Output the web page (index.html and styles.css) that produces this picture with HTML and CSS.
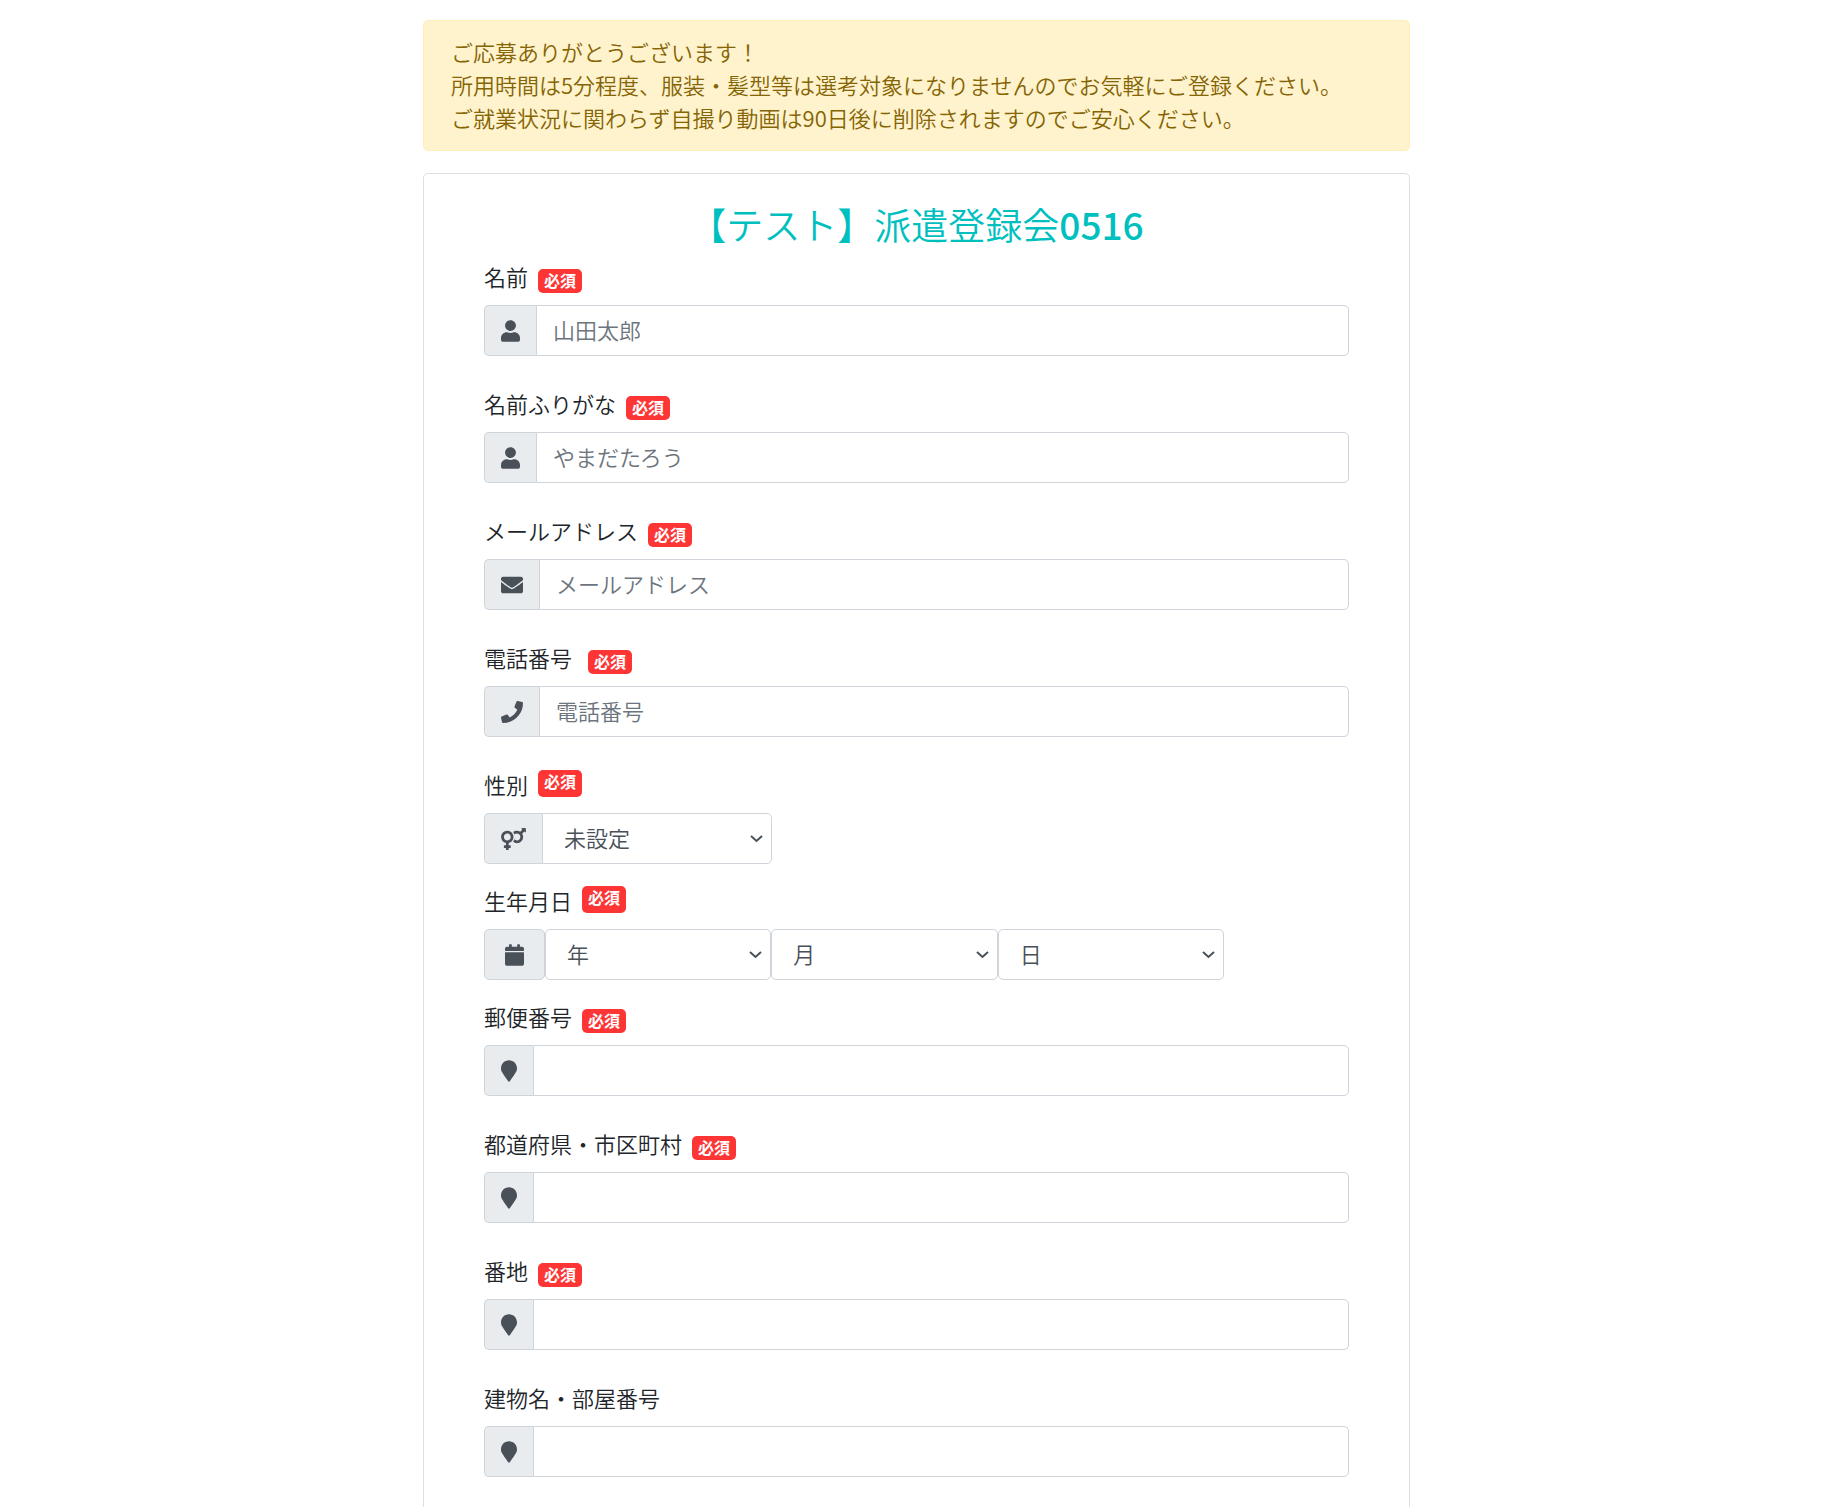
FILE: index.html
```html
<!DOCTYPE html>
<html lang="ja">
<head>
    <meta charset="UTF-8">
    <meta name="viewport" content="width=device-width, initial-scale=1.0">
    <title>【テスト】派遣登録会0516</title>
    <link rel="stylesheet" href="styles.css">
</head>
<body>
    <!-- Shared icons -->
    <svg class="icon-defs" aria-hidden="true">
        <symbol id="icon-user" viewBox="0 0 448 512"><path d="M224 256c70.7 0 128-57.3 128-128S294.7 0 224 0 96 57.3 96 128s57.3 128 128 128zm89.6 32h-16.7c-22.2 10.2-46.9 16-72.9 16s-50.6-5.8-72.9-16h-16.7C60.2 288 0 348.2 0 422.4V464c0 26.5 21.5 48 48 48h352c26.5 0 48-21.5 48-48v-41.6c0-74.2-60.2-134.4-134.4-134.4z"/></symbol>
        <symbol id="icon-marker" viewBox="0 0 384 512"><path d="M172.268 501.67C26.97 291.031 0 269.413 0 192 0 85.961 85.961 0 192 0s192 85.961 192 192c0 77.413-26.97 99.031-172.268 309.67-9.535 13.774-29.93 13.773-39.464 0z"/></symbol>
    </svg>

    <main class="container">
        <div class="alert">
            ご応募ありがとうございます！<br>
            所用時間は5分程度、服装・髪型等は選考対象になりませんのでお気軽にご登録ください。<br>
            ご就業状況に関わらず自撮り動画は90日後に削除されますのでご安心ください。
        </div>

        <form class="card">
            <h1 class="card-title">【テスト】派遣登録会<span class="title-number">0516</span></h1>

            <div class="form-group">
                <div class="form-label">
                    <label for="name">名前</label>
                    <span class="badge">必須</span>
                </div>
                <div class="input-group">
                    <span class="input-icon"><svg class="icon"><use href="#icon-user"/></svg></span>
                    <input type="text" id="name" class="form-control" placeholder="山田太郎">
                </div>
            </div>

            <div class="form-group">
                <div class="form-label">
                    <label for="kana">名前ふりがな</label>
                    <span class="badge">必須</span>
                </div>
                <div class="input-group">
                    <span class="input-icon"><svg class="icon"><use href="#icon-user"/></svg></span>
                    <input type="text" id="kana" class="form-control" placeholder="やまだたろう">
                </div>
            </div>

            <div class="form-group">
                <div class="form-label">
                    <label for="email">メールアドレス</label>
                    <span class="badge">必須</span>
                </div>
                <div class="input-group">
                    <span class="input-icon"><svg class="icon icon-square" viewBox="0 0 512 512"><path d="M502.3 190.8c3.9-3.1 9.7-.2 9.7 4.7V400c0 26.5-21.5 48-48 48H48c-26.5 0-48-21.5-48-48V195.6c0-5 5.7-7.8 9.7-4.7 22.4 17.4 52.1 39.5 154.1 113.6 21.1 15.4 56.7 47.8 92.2 47.6 35.7.3 72-32.8 92.3-47.6 102-74.1 131.6-96.3 154-113.7zM256 320c23.2.4 56.6-29.2 73.4-41.4 132.7-96.3 142.8-104.7 173.4-128.7 5.8-4.5 9.2-11.5 9.2-18.9v-19c0-26.5-21.5-48-48-48H48c-26.5 0-48 21.5-48 48v19c0 7.4 3.4 14.3 9.2 18.9 30.6 23.9 40.7 32.4 173.4 128.7 16.8 12.2 50.2 41.8 73.4 41.4z"/></svg></span>
                    <input type="email" id="email" class="form-control" placeholder="メールアドレス">
                </div>
            </div>

            <div class="form-group">
                <div class="form-label form-label-wide">
                    <label for="tel">電話番号</label>
                    <span class="badge">必須</span>
                </div>
                <div class="input-group">
                    <span class="input-icon"><svg class="icon icon-square" viewBox="0 0 512 512"><path d="M493.4 24.6l-104-24c-11.3-2.6-22.9 3.3-27.5 13.9l-48 112c-4.2 9.8-1.4 21.3 6.9 28l60.6 49.6c-36 76.7-98.9 140.5-177.2 177.2l-49.6-60.6c-6.8-8.3-18.2-11.1-28-6.9l-112 48C3.9 366.5-2 378.1.6 389.4l24 104C27.1 504.2 36.7 512 48 512c256.1 0 464-207.5 464-464 0-11.2-7.7-20.9-18.6-23.4z"/></svg></span>
                    <input type="tel" id="tel" class="form-control" placeholder="電話番号">
                </div>
            </div>

            <div class="form-group form-group-select">
                <div class="form-label">
                    <label for="gender">性別</label>
                    <span class="badge badge-tall">必須</span>
                </div>
                <div class="input-group gender-group">
                    <span class="input-icon"><svg class="icon icon-wide" viewBox="0 0 576 512"><path d="M564 0h-79c-10.7 0-16 12.9-8.5 20.5l16.9 16.9-48.7 48.7C422.5 72.1 396.2 64 368 64c-33.7 0-64.6 11.6-89.2 30.9 14 16.7 25 36 32.1 57.1 14.5-14.8 34.7-24 57.1-24 44.1 0 80 35.9 80 80s-35.9 80-80 80c-22.3 0-42.6-9.2-57.1-24-7.1 21.1-18 40.4-32.1 57.1 24.5 19.4 55.5 30.9 89.2 30.9 79.5 0 144-64.5 144-144 0-28.2-8.1-54.5-22.1-76.7l48.7-48.7 16.9 16.9c2.4 2.4 5.4 3.5 8.4 3.5 6.2 0 12.1-4.8 12.1-12V12c0-6.6-5.4-12-12-12zM144 64C64.5 64 0 128.5 0 208c0 68.5 47.9 125.9 112 140.4V400H76c-6.6 0-12 5.4-12 12v40c0 6.6 5.4 12 12 12h36v36c0 6.6 5.4 12 12 12h40c6.6 0 12-5.4 12-12v-36h36c6.6 0 12-5.4 12-12v-40c0-6.6-5.4-12-12-12h-36v-51.6c64.1-14.6 112-71.9 112-140.4 0-79.5-64.5-144-144-144zm0 224c-44.1 0-80-35.9-80-80s35.9-80 80-80 80 35.9 80 80-35.9 80-80 80z"/></svg></span>
                    <select id="gender" class="form-control">
                        <option>未設定</option>
                        <option>男性</option>
                        <option>女性</option>
                    </select>
                </div>
            </div>

            <div class="form-group form-group-select">
                <div class="form-label">
                    <label for="birth-year">生年月日</label>
                    <span class="badge badge-tall">必須</span>
                </div>
                <div class="input-group birth-group">
                    <span class="input-icon"><svg class="icon" viewBox="0 0 448 512"><path d="M12 192h424c6.6 0 12 5.4 12 12v260c0 26.5-21.5 48-48 48H48c-26.5 0-48-21.5-48-48V204c0-6.6 5.4-12 12-12zm436-44v-36c0-26.5-21.5-48-48-48h-48V12c0-6.6-5.4-12-12-12h-40c-6.6 0-12 5.4-12 12v52H160V12c0-6.6-5.4-12-12-12h-40c-6.6 0-12 5.4-12 12v52H48C21.5 64 0 85.5 0 112v36c0 6.6 5.4 12 12 12h424c6.6 0 12-5.4 12-12z"/></svg></span>
                    <select id="birth-year" class="form-control">
                        <option>年</option>
                    </select>
                    <select id="birth-month" class="form-control" aria-label="月">
                        <option>月</option>
                    </select>
                    <select id="birth-day" class="form-control" aria-label="日">
                        <option>日</option>
                    </select>
                </div>
            </div>

            <div class="form-group">
                <div class="form-label">
                    <label for="zip">郵便番号</label>
                    <span class="badge">必須</span>
                </div>
                <div class="input-group">
                    <span class="input-icon"><svg class="icon icon-narrow"><use href="#icon-marker"/></svg></span>
                    <input type="text" id="zip" class="form-control">
                </div>
            </div>

            <div class="form-group">
                <div class="form-label">
                    <label for="city">都道府県・市区町村</label>
                    <span class="badge">必須</span>
                </div>
                <div class="input-group">
                    <span class="input-icon"><svg class="icon icon-narrow"><use href="#icon-marker"/></svg></span>
                    <input type="text" id="city" class="form-control">
                </div>
            </div>

            <div class="form-group">
                <div class="form-label">
                    <label for="street">番地</label>
                    <span class="badge">必須</span>
                </div>
                <div class="input-group">
                    <span class="input-icon"><svg class="icon icon-narrow"><use href="#icon-marker"/></svg></span>
                    <input type="text" id="street" class="form-control">
                </div>
            </div>

            <div class="form-group">
                <div class="form-label">
                    <label for="building">建物名・部屋番号</label>
                </div>
                <div class="input-group">
                    <span class="input-icon"><svg class="icon icon-narrow"><use href="#icon-marker"/></svg></span>
                    <input type="text" id="building" class="form-control">
                </div>
            </div>
        </form>
    </main>
</body>
</html>
```
FILE: styles.css
```css
* {
    margin: 0;
    padding: 0;
    box-sizing: border-box;
}

:root {
    --title-color: #00bfbf;
    --badge-color: #fd3535;
    --text-color: #212529;
    --control-color: #495057;
    --border-color: #ced4da;
    --border-radius: 5px;
}

body {
    background-color: #fff;
    color: var(--text-color);
    font-family: "Noto Sans CJK JP", sans-serif;
    font-size: 22px;
    font-weight: 350;
    line-height: 28px;
}

.icon-defs {
    display: none;
}

.container {
    max-width: 987px;
    margin: 0 auto;
    padding: 20px 0;
}

/* Notice */
.alert {
    margin-bottom: 22px;
    padding: 14px 27px 16px;
    background-color: #fff3cd;
    border: 1px solid #ffeeba;
    border-radius: var(--border-radius);
    color: #856404;
    line-height: 33px;
}

/* Form card */
.card {
    padding: 28px 60px;
    border: 1px solid #dfdfdf;
    border-radius: var(--border-radius);
}

.card-title {
    margin-bottom: 16px;
    color: var(--title-color);
    font-size: 37px;
    font-weight: 350;
    line-height: 44px;
    text-align: center;
}

.title-number {
    font-weight: 500;
}

.form-group {
    margin-bottom: 33px;
}

.form-group-select {
    margin-bottom: 22px;
}

.form-label {
    display: flex;
    align-items: flex-start;
    gap: 10px;
    height: 32px;
    margin-bottom: 11px;
}

.form-label-wide {
    gap: 16px;
}

.badge {
    margin-top: 7px;
    padding: 0 6px 1px;
    background-color: var(--badge-color);
    border-radius: var(--border-radius);
    color: #fff;
    font-size: 16px;
    font-weight: 700;
    line-height: 23px;
}

.badge-tall {
    margin-top: 0;
    padding-bottom: 4px;
}

/* Inputs */
.input-group {
    display: flex;
    height: 51px;
}

.input-icon {
    display: flex;
    align-items: center;
    padding: 0 16px;
    background-color: #e9ecef;
    border: 1px solid var(--border-color);
    border-right: none;
    border-radius: var(--border-radius) 0 0 var(--border-radius);
}

.icon {
    width: 19px;
    height: 22px;
    fill: var(--control-color);
}

.icon-square {
    width: 22px;
}

.icon-wide {
    width: 25px;
}

.icon-narrow {
    width: 16px;
}

.form-control {
    flex: 1;
    min-width: 0;
    padding: 0 16px 3px;
    background-color: #fff;
    border: 1px solid var(--border-color);
    border-radius: 0 var(--border-radius) var(--border-radius) 0;
    color: var(--control-color);
    font: inherit;
}

.form-control::placeholder {
    color: #6c757d;
    opacity: 1;
}

select.form-control {
    padding: 0 21px 3px;
    appearance: none;
    background-image: url("data:image/svg+xml,%3Csvg xmlns='http://www.w3.org/2000/svg' viewBox='0 0 13 8'%3E%3Cpath d='M1 1l5.500 5 5.500-5' fill='none' stroke='%23495057' stroke-width='2'/%3E%3C/svg%3E");
    background-position: right 8px center;
    background-repeat: no-repeat;
    background-size: 13px 8px;
}

.gender-group {
    max-width: 288px;
}

.birth-group {
    max-width: 740px;
}

.birth-group .input-icon {
    padding: 0 20px;
    border-right: 1px solid var(--border-color);
    border-radius: var(--border-radius);
}

.birth-group .form-control {
    border-radius: var(--border-radius);
}

@media (max-width: 1020px) {
    .container {
        padding: 20px;
    }

    .card {
        padding: 28px 20px;
    }
}
```
